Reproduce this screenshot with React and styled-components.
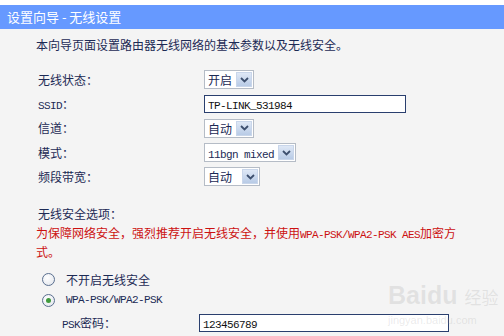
import React from 'react';
import styled, { createGlobalStyle } from 'styled-components';

const GlobalStyle = createGlobalStyle`
  html, body {
    margin: 0;
    padding: 0;
    background: #ffffff;
  }
`;

// ***************** PAGE *****************
const Page = styled.div`
  position: relative;
  width: 504px;
  height: 336px;
  overflow: hidden;
  padding-top: 5px;
  box-sizing: border-box;
  font-family: "Noto Sans CJK SC", sans-serif;
  font-size: 12px;
  color: #1c2a55;
`;

const Header = styled.div`
  height: 24px;
  background: #6699ff;
  color: #ffffff;
  font-size: 13px;
  line-height: 24px;
  padding-left: 7px;
`;

const Body = styled.div`
  background: #f4f4f4;
  height: 307px;
  padding: 9px 0 0 36px;
  box-sizing: border-box;
`;

const Intro = styled.div`
  line-height: 14px;
  margin-bottom: 18px;
`;

// ***************** FORM *****************
const Form = styled.div`
  display: grid;
  grid-template-columns: 166px auto;
  grid-auto-rows: 19.5px;
  row-gap: 4.8px;
  padding-left: 2px;
  align-items: center;
`;

const Label = styled.div`
  line-height: 16px;
`;

const Mono = styled.span`
  font-family: "Liberation Mono", "Noto Sans CJK SC", monospace;
  font-size: 11px;
  line-height: 1;
  letter-spacing: -0.6px;
`;

const SelectBox = styled.div`
  display: flex;
  align-items: stretch;
  width: ${p => p.$w}px;
  height: 19px;
  background: #ffffff;
  border: 1px solid #b5bcc6;
  box-sizing: border-box;
`;

const SelectText = styled.div`
  flex: 1;
  padding-left: 3px;
  line-height: 17px;
  white-space: nowrap;
`;

const Arrow = styled.div`
  width: 16px;
  margin: 1px;
  background: linear-gradient(#dfe8f6, #b8cbe6);
  border: 1px solid #c9d6ea;
  box-sizing: border-box;
  display: flex;
  align-items: center;
  justify-content: center;
`;

const TextInput = styled.div`
  width: ${p => p.$w}px;
  height: 18px;
  background: #ffffff;
  border: 1px solid #2a3f6e;
  box-sizing: border-box;
  padding-left: 3px;
  line-height: 16px;
  color: #111;
`;

const Chevron = () => (
  <svg width="9" height="6" viewBox="0 0 9 6">
    <path d="M1 1 L4.5 4.5 L8 1" fill="none" stroke="#3d4f6e" strokeWidth="1.8" />
  </svg>
);

const Select = ({ w, children }) => (
  <SelectBox $w={w}>
    <SelectText>{children}</SelectText>
    <Arrow><Chevron /></Arrow>
  </SelectBox>
);

// ***************** SECURITY *****************
const SectionTitle = styled.div`
  margin: 19px 0 0 2px;
  line-height: 16px;
`;

const Warning = styled.div`
  color: #cc1111;
  line-height: 19px;
  width: 428px;
  margin-top: 1px;
`;

const Options = styled.div`
  margin-top: 8px;
`;

const RadioRow = styled.div`
  display: flex;
  align-items: center;
  height: 21.5px;
  padding-left: 6px;
`;

const RadioCircle = styled.span`
  width: 11px;
  height: 11px;
  border-radius: 50%;
  border: 1px solid #5a6f8f;
  background: radial-gradient(circle at 40% 35%, #ffffff, #dfe3ea);
  display: inline-flex;
  align-items: center;
  justify-content: center;
  margin-right: 11px;
  &::after {
    content: '';
    display: ${p => (p.$on ? 'block' : 'none')};
    width: 5px;
    height: 5px;
    border-radius: 50%;
    background: #3f9a3c;
  }
`;

const PskRow = styled.div`
  display: grid;
  grid-template-columns: 137px auto;
  align-items: center;
  padding-left: 26px;
  margin-top: 2px;
`;

// ***************** WATERMARK *****************
const Watermark = styled.div`
  position: absolute;
  left: 388px;
  top: 282px;
  color: rgba(160, 160, 160, 0.22);
  font-family: "Liberation Sans", sans-serif;
  pointer-events: none;
`;

const MarkBig = styled.div`
  font-size: 25px;
  font-weight: bold;
  line-height: 26px;
  span { font-family: "Noto Sans CJK SC", sans-serif; font-size: 17px; font-weight: normal; }
`;

const MarkSmall = styled.div`
  font-size: 11px;
  margin-top: 4px;
`;

export default function App() {
  return (
    <>
      <GlobalStyle />
      <Page>
        <Header>设置向导 - 无线设置</Header>
        <Body>
          <Intro>本向导页面设置路由器无线网络的基本参数以及无线安全。</Intro>
          <Form>
            <Label>无线状态：</Label>
            <Select w={50}>开启</Select>
            <Label><Mono>SSID</Mono>：</Label>
            <TextInput $w={202}><Mono>TP-LINK_531984</Mono></TextInput>
            <Label>信道：</Label>
            <Select w={50}>自动</Select>
            <Label>模式：</Label>
            <Select w={92}><Mono>11bgn mixed</Mono></Select>
            <Label>频段带宽：</Label>
            <Select w={56}>自动</Select>
          </Form>

          <SectionTitle>无线安全选项：</SectionTitle>
          <Warning>
            为保障网络安全，强烈推荐开启无线安全，并使用<Mono>WPA-PSK/WPA2-PSK AES</Mono>加密方式。
          </Warning>
          <Options>
            <RadioRow><RadioCircle />不开启无线安全</RadioRow>
            <RadioRow><RadioCircle $on /><Mono>WPA-PSK/WPA2-PSK</Mono></RadioRow>
            <PskRow>
              <Label><Mono>PSK</Mono>密码：</Label>
              <TextInput $w={250}><Mono>123456789</Mono></TextInput>
            </PskRow>
          </Options>
        </Body>
        <Watermark>
          <MarkBig>Baidu <span>经验</span></MarkBig>
          <MarkSmall>jingyan.baidu.com</MarkSmall>
        </Watermark>
      </Page>
    </>
  );
}
